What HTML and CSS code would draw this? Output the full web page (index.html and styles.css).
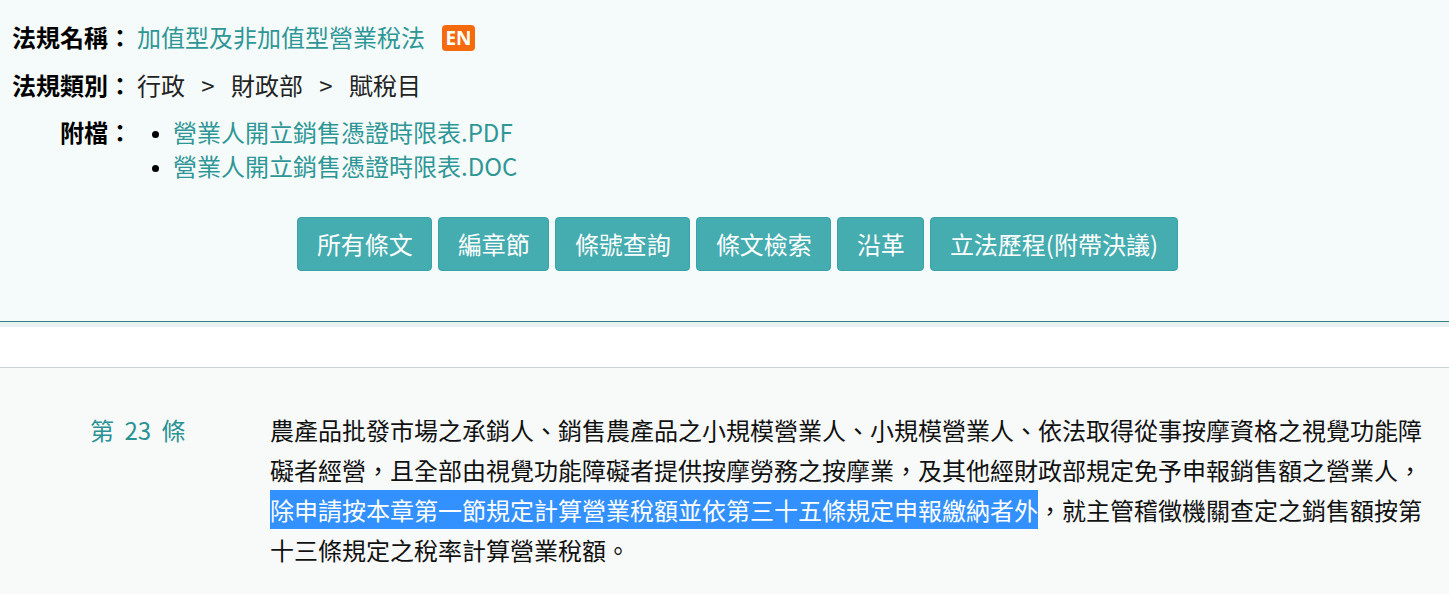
FILE: index.html
```html
<!DOCTYPE html>
<html lang="zh-Hant">
<head>
<meta charset="utf-8">
<title>加值型及非加值型營業稅法</title>
<link rel="stylesheet" href="styles.css">
</head>
<body>
<section class="top">
  <div class="row">
    <div class="label">法規名稱：</div>
    <div class="value teal">加值型及非加值型營業稅法<span class="en">EN</span></div>
  </div>
  <div class="row">
    <div class="label">法規類別：</div>
    <div class="value dark">行政<span class="sep">&gt;</span>財政部<span class="sep">&gt;</span>賦稅目</div>
  </div>
  <div class="row files">
    <div class="label">附檔：</div>
    <ul class="value list">
      <li><a class="teal">營業人開立銷售憑證時限表.PDF</a></li>
      <li><a class="teal">營業人開立銷售憑證時限表.DOC</a></li>
    </ul>
  </div>
  <div class="btns">
    <a class="btn">所有條文</a>
    <a class="btn">編章節</a>
    <a class="btn">條號查詢</a>
    <a class="btn">條文檢索</a>
    <a class="btn">沿革</a>
    <a class="btn">立法歷程(附帶決議)</a>
  </div>
</section>
<div class="band"></div>
<section class="article">
  <div class="num">第 23 條</div>
  <div class="text">農產品批發市場之承銷人、銷售農產品之小規模營業人、小規模營業人、依法取得從事按摩資格之視覺功能障礙者經營，且全部由視覺功能障礙者提供按摩勞務之按摩業，及其他經財政部規定免予申報銷售額之營業人，<span class="sel">除申請按本章第一節規定計算營業稅額並依第三十五條規定申報繳納者外</span>，就主管稽徵機關查定之銷售額按第十三條規定之稅率計算營業稅額。</div>
</section>
</body>
</html>
```

FILE: styles.css
```css
html, body {
  margin: 0;
  padding: 0;
}
body {
  font-family: "Noto Sans CJK TC", "Noto Sans CJK SC", sans-serif;
  font-size: 24px;
  color: #111;
  background: #f8fafa;
}
.top {
  background: #f5fbfb;
  padding: 13px 0 50px 12px;
  border-bottom: 1px solid #2f7f80;
}
.row {
  display: flex;
  line-height: 48px;
}
.label {
  width: 120px;
  text-align: right;
  font-weight: 700;
  color: #000;
  flex: none;
}
.value {
  margin-left: 5px;
}
.teal {
  color: #2f9696;
}
.dark {
  color: #222;
}
.sep {
  display: inline-block;
  width: 46px;
  text-align: center;
}
.en {
  display: inline-block;
  vertical-align: middle;
  margin-left: 17px;
  margin-top: -4px;
  width: 33px;
  height: 26px;
  line-height: 26px;
  border-radius: 4px;
  background: #f56a0c;
  color: #fff;
  font-family: "Open Sans", "Liberation Sans", sans-serif;
  font-weight: 700;
  font-size: 19px;
  text-align: center;
}
.files {
  margin-top: 6px;
  line-height: 34px;
}
.list {
  margin-top: 0;
  margin-bottom: 0;
  padding-left: 36px;
  list-style: disc;
  color: #000;
}
.list li::marker {
  font-size: 18px;
}
.btns {
  display: flex;
  justify-content: center;
  gap: 6px;
  margin-top: 34px;
  padding-left: 14px;
}
.btn {
  display: block;
  height: 52px;
  line-height: 52px;
  padding: 0 18.5px;
  background: #45acb0;
  border: 1px solid #3aa2a6;
  border-radius: 4px;
  color: #fff;
  font-size: 24px;
}
.band {
  background: #fff;
  border-top: 5px solid #e8f2f2;
  border-bottom: 1px solid #c9d4d4;
  height: 40px;
}
.article {
  display: flex;
  padding: 42px 0 40px 90px;
  line-height: 40px;
}
.num {
  width: 180px;
  flex: none;
  color: #2a9292;
  word-spacing: 5px;
}
.text {
  width: 1160px;
  color: #111;
}
.sel {
  background: #3390ff;
  color: #fff;
  padding: 2px 0;
}
```
